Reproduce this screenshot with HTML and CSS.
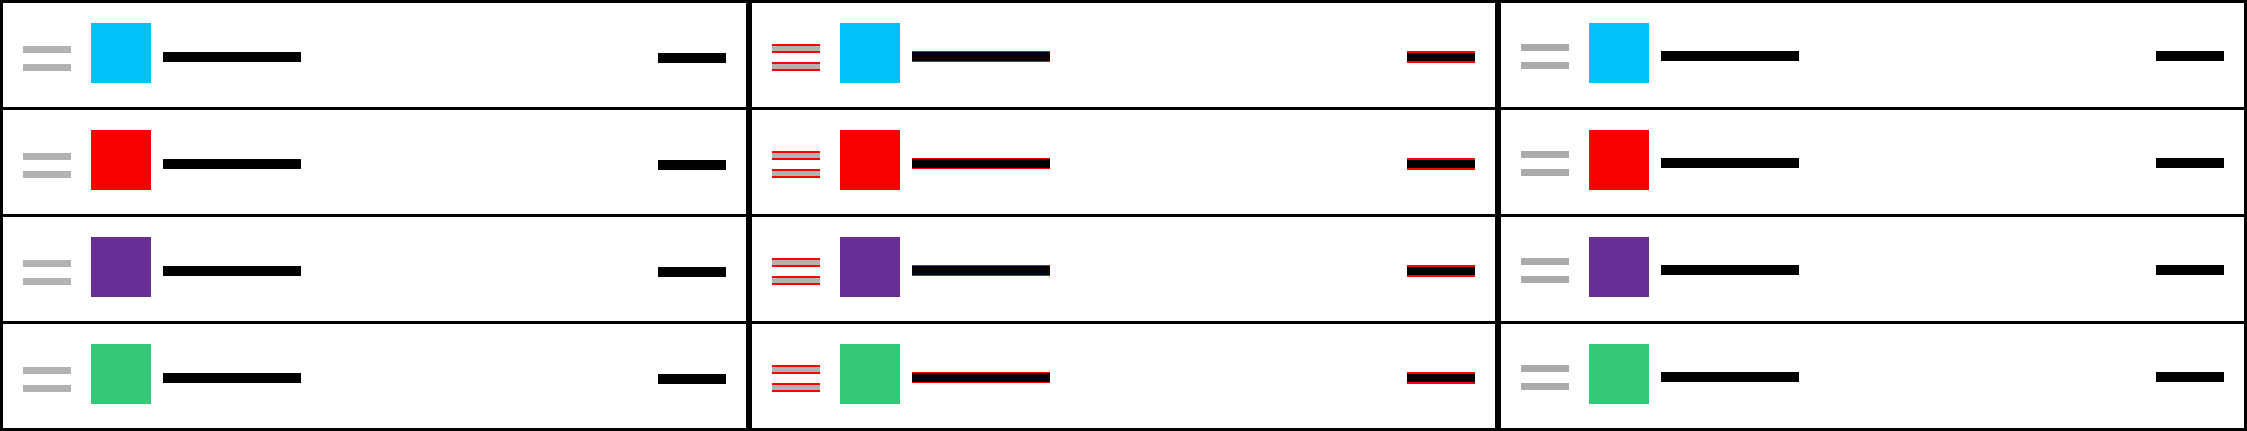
FILE: index.html
```html
<!DOCTYPE html>
<html lang="en">
<head>
  <meta charset="UTF-8">
  <meta name="viewport" content="width=device-width, initial-scale=1.0">
  <title>Sortable list diff</title>
  <link rel="stylesheet" href="styles.css">
</head>
<body>
  <div class="compare">
    <!-- expected -->
    <ul class="list">
      <li class="item"><div class="handle"><span></span><span></span></div><div class="swatch blue"></div><div class="label"></div><div class="value"></div></li>
      <li class="item"><div class="handle"><span></span><span></span></div><div class="swatch red"></div><div class="label"></div><div class="value"></div></li>
      <li class="item"><div class="handle"><span></span><span></span></div><div class="swatch purple"></div><div class="label"></div><div class="value"></div></li>
      <li class="item"><div class="handle"><span></span><span></span></div><div class="swatch green"></div><div class="label"></div><div class="value"></div></li>
    </ul>
    <!-- diff -->
    <ul class="list list-diff">
      <li class="item"><div class="handle"><span></span><span></span></div><div class="swatch blue"></div><div class="label"></div><div class="value"></div></li>
      <li class="item"><div class="handle"><span></span><span></span></div><div class="swatch red"></div><div class="label"></div><div class="value"></div></li>
      <li class="item"><div class="handle"><span></span><span></span></div><div class="swatch purple"></div><div class="label"></div><div class="value"></div></li>
      <li class="item"><div class="handle"><span></span><span></span></div><div class="swatch green"></div><div class="label"></div><div class="value"></div></li>
    </ul>
    <!-- actual -->
    <ul class="list list-actual">
      <li class="item"><div class="handle"><span></span><span></span></div><div class="swatch blue"></div><div class="label"></div><div class="value"></div></li>
      <li class="item"><div class="handle"><span></span><span></span></div><div class="swatch red"></div><div class="label"></div><div class="value"></div></li>
      <li class="item"><div class="handle"><span></span><span></span></div><div class="swatch purple"></div><div class="label"></div><div class="value"></div></li>
      <li class="item"><div class="handle"><span></span><span></span></div><div class="swatch green"></div><div class="label"></div><div class="value"></div></li>
    </ul>
  </div>
</body>
</html>
```

FILE: styles.css
```css
body { margin:0; padding:0; background:#fff; }

.compare {
  display:flex;
}

.list {
  list-style:none;
  margin:0;
  padding:0;
  width:743px;
  border:3px solid #000;
}

.item {
  display:flex;
  align-items:flex-start;
  height:104px;
  padding:0 20px;
  border-bottom:3px solid #000;
}
.item:last-child { border-bottom:0; }

.handle {
  display:flex;
  flex-direction:column;
  gap:11px;
  width:48px;
  margin-top:43px;
}
.handle span {
  display:block;
  height:7px;
  background:#b3b3b3;
}

.swatch {
  width:60px;
  height:60px;
  margin:20px 0 0 20px;
}
.blue { background:#00c1f9; }
.red { background:#f80000; }
.purple { background:#692d96; }
.green { background:#35c879; }

.label {
  width:138px;
  height:10px;
  margin:49px 0 0 12px;
  background:#000;
}

.value {
  width:68px;
  height:10px;
  margin:50px 0 0 auto;
  background:#000;
}

/* actual render, shifted up a little */
.list-actual .handle { margin-top:41px; }
.list-actual .handle span { background:#aaa; }
.list-actual .label { margin-top:48px; }
.list-actual .value { margin-top:48px; }

/* diff: red where the two renders differ */
.list-diff .handle {
  margin-top:41px;
  gap:9px;
}
.list-diff .handle span {
  height:5px;
  border-top:2px solid #f00;
  border-bottom:2px solid #f00;
}
.list-diff .label {
  margin-top:48px;
  height:9px;
  border-top:1px solid #f00;
  border-bottom:1px solid #f00;
}
.list-diff .value {
  margin-top:48px;
  height:8px;
  border-top:2px solid #f00;
  border-bottom:2px solid #f00;
}
```
